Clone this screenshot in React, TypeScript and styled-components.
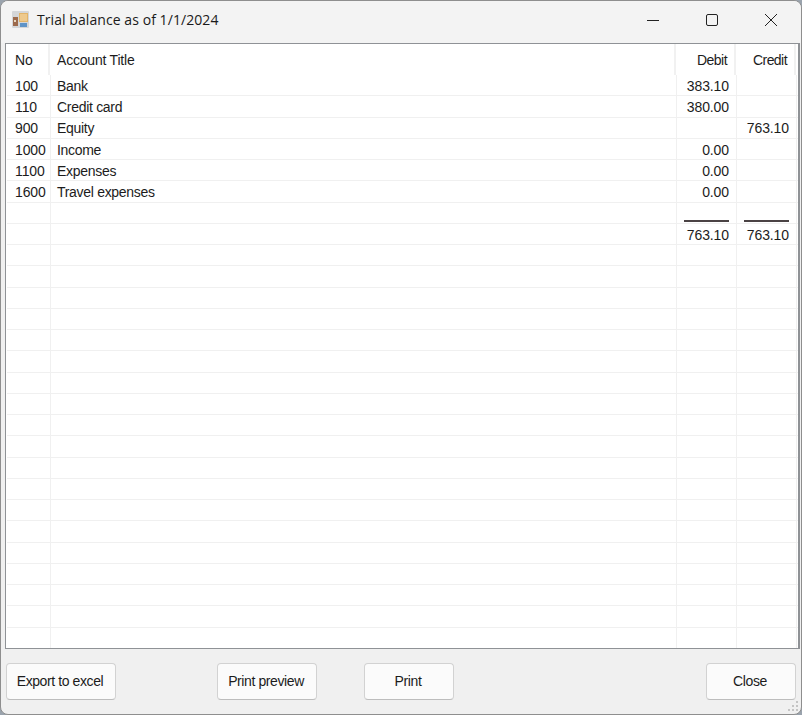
import styled, { createGlobalStyle } from "styled-components";

const GlobalStyle = createGlobalStyle`
  html, body {
    margin: 0;
    padding: 0;
    width: 802px;
    height: 715px;
    overflow: hidden;
    background: #9aa3ad;
  }
`;

const COLUMNS = "44px 626px 60px 60px";

const accounts = [
  { no: "100", title: "Bank", debit: "383.10", credit: "" },
  { no: "110", title: "Credit card", debit: "380.00", credit: "" },
  { no: "900", title: "Equity", debit: "", credit: "763.10" },
  { no: "1000", title: "Income", debit: "0.00", credit: "" },
  { no: "1100", title: "Expenses", debit: "0.00", credit: "" },
  { no: "1600", title: "Travel expenses", debit: "0.00", credit: "" },
];

const EMPTY_ROWS = 19;

function AppIcon() {
  return (
    <svg width="17" height="17" viewBox="0 0 17 17">
      <rect x="0" y="0" width="17" height="17" rx="1" fill="#d4d6d8" />
      <rect x="1" y="6" width="5" height="9" fill="#9c6a4c" />
      <rect x="2" y="9" width="2" height="2" fill="#e9d9c2" />
      <rect x="7" y="2" width="9" height="9" fill="#e2b469" />
      <rect x="8" y="3" width="7" height="7" fill="#eec98c" />
      <rect x="8" y="12" width="7" height="4" fill="#5f94c8" />
    </svg>
  );
}

function ResizeGrip() {
  return (
    <Grip width="12" height="12" viewBox="0 0 12 12" fill="#c4c4c4">
      <rect x="8" y="0" width="2" height="2" />
      <rect x="4" y="4" width="2" height="2" />
      <rect x="8" y="4" width="2" height="2" />
      <rect x="0" y="8" width="2" height="2" />
      <rect x="4" y="8" width="2" height="2" />
      <rect x="8" y="8" width="2" height="2" />
    </Grip>
  );
}

export default function App() {
  return (
    <>
      <GlobalStyle />
      <Window>
        <TitleBar>
          <AppIcon />
          <Title>Trial balance as of 1/1/2024</Title>
          <Controls>
            <ControlButton>
              <svg width="14" height="14" viewBox="0 0 14 14" stroke="#222" fill="none">
                <path d="M1 7.5h12" />
              </svg>
            </ControlButton>
            <ControlButton>
              <svg width="14" height="14" viewBox="0 0 14 14" stroke="#222" fill="none">
                <rect x="1.5" y="1.5" width="11" height="11" rx="1.5" />
              </svg>
            </ControlButton>
            <ControlButton>
              <svg width="14" height="14" viewBox="0 0 14 14" stroke="#222" fill="none">
                <path d="M1 1l12 12M13 1L1 13" />
              </svg>
            </ControlButton>
          </Controls>
        </TitleBar>

        <Panel>
          <HeaderRow>
            <HeaderCell>No</HeaderCell>
            <HeaderCell $title>Account Title</HeaderCell>
            <HeaderCell $right>Debit</HeaderCell>
            <HeaderCell $right>Credit</HeaderCell>
          </HeaderRow>
          <Rows>
            {accounts.map((a) => (
              <Row key={a.no}>
                <Cell>{a.no}</Cell>
                <Cell $title>{a.title}</Cell>
                <Cell $right>{a.debit}</Cell>
                <Cell $right>{a.credit}</Cell>
              </Row>
            ))}
            <Row>
              <Cell />
              <Cell />
              <RuleCell>
                <Rule />
              </RuleCell>
              <RuleCell>
                <Rule />
              </RuleCell>
            </Row>
            <Row>
              <Cell />
              <Cell />
              <Cell $right>763.10</Cell>
              <Cell $right>763.10</Cell>
            </Row>
            {Array.from({ length: EMPTY_ROWS }, (_, i) => (
              <Row key={i}>
                <Cell />
                <Cell />
                <Cell />
                <Cell />
              </Row>
            ))}
          </Rows>
        </Panel>

        <Footer>
          <Button $width={110}>Export to excel</Button>
          <Button $width={100} $left={101}>Print preview</Button>
          <Button $width={90} $left={47}>Print</Button>
          <Button $width={90} $left={252}>Close</Button>
        </Footer>
        <ResizeGrip />
      </Window>
    </>
  );
}

const Window = styled.div`
  position: relative;
  box-sizing: border-box;
  width: 802px;
  height: 715px;
  display: flex;
  flex-direction: column;
  overflow: hidden;
  background: #f0f0f0;
  border: 1px solid #8e8e8e;
  border-radius: 8px;
  font-family: "Liberation Sans", Arial, sans-serif;
  color: #1c1c1c;
`;

const TitleBar = styled.div`
  flex: none;
  box-sizing: border-box;
  height: 42px;
  display: flex;
  align-items: center;
  padding: 0 0 5px 11px;
  background: #f3f3f3;
`;

const Title = styled.span`
  margin-left: 8px;
  font-family: "Open Sans", "Noto Sans", sans-serif;
  font-size: 14px;
  letter-spacing: 0.07px;
  color: #1a1a1a;
`;

const Controls = styled.div`
  margin-left: auto;
  display: flex;
  align-items: center;
  padding-right: 1px;
`;

const ControlButton = styled.div`
  width: 59px;
  height: 37px;
  display: flex;
  align-items: center;
  justify-content: center;
`;

const Panel = styled.div`
  flex: none;
  box-sizing: border-box;
  height: 606px;
  width: 795px;
  margin-left: 4px;
  background: #ffffff;
  border: 1px solid #8f9296;
  border-right-width: 2px;
  display: flex;
  flex-direction: column;
  overflow: hidden;
`;

const HeaderRow = styled.div`
  flex: none;
  height: 31px;
  display: grid;
  grid-template-columns: ${COLUMNS};
  font-size: 14px;
`;

const HeaderCell = styled.div<{ $right?: boolean; $title?: boolean }>`
  display: flex;
  align-items: center;
  justify-content: ${(p) => (p.$right ? "flex-end" : "flex-start")};
  padding: 0 7px 0 ${(p) => (p.$title ? 7 : 9)}px;
  letter-spacing: ${(p) => (p.$right ? -0.55 : -0.2)}px;
  border-right: 2px solid #f1f1f1;
`;

const Rows = styled.div`
  margin-left: 1px;
  display: flex;
  flex-direction: column;
`;

const Row = styled.div`
  flex: none;
  box-sizing: border-box;
  height: 21.25px;
  display: grid;
  grid-template-columns: ${COLUMNS};
  border-bottom: 1px solid #f0f0f0;
  font-size: 14px;
`;

const Cell = styled.div<{ $right?: boolean; $title?: boolean }>`
  display: flex;
  align-items: center;
  justify-content: ${(p) => (p.$right ? "flex-end" : "flex-start")};
  padding: 1.5px 7px 0 ${(p) => (p.$title ? 6 : 8)}px;
  letter-spacing: ${(p) => (p.$title ? -0.3 : -0.1)}px;
  border-right: 1px solid #f0f0f0;
`;

const RuleCell = styled.div`
  display: flex;
  align-items: flex-end;
  justify-content: flex-end;
  padding: 0 7px 1px 0;
  border-right: 1px solid #f0f0f0;
`;

const Rule = styled.div`
  width: 45px;
  height: 2px;
  background: #4a4244;
`;

const Footer = styled.div`
  flex: 1;
  display: flex;
  align-items: flex-start;
  padding: 14px 0 0 5px;
`;

const Button = styled.div<{ $width: number; $left?: number }>`
  box-sizing: border-box;
  width: ${(p) => p.$width}px;
  height: 37px;
  margin-left: ${(p) => p.$left ?? 0}px;
  padding: 0 2px 2px 0;
  display: flex;
  align-items: center;
  justify-content: center;
  background: #fbfbfb;
  border: 1px solid #d2d2d2;
  border-bottom-color: #bdbdbd;
  border-radius: 4px;
  font-size: 14px;
  letter-spacing: -0.4px;
`;

const Grip = styled.svg`
  position: absolute;
  right: 1px;
  bottom: 1px;
`;
